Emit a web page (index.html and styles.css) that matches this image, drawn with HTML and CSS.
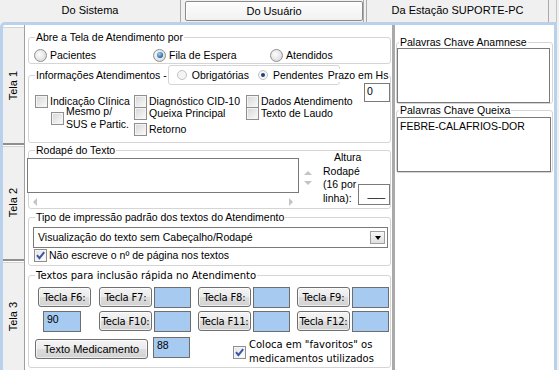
FILE: index.html
```html
<!DOCTYPE html>
<html lang="pt-BR">
<head>
<meta charset="utf-8">
<title>Configurações</title>
<link rel="stylesheet" href="styles.css">
</head>
<body>
<div class="topbar">
  <div class="ttab t1">Do Sistema</div>
  <div class="ttab t2">Do Usuário</div>
  <div class="tsep"></div>
  <div class="ttab t3">Da Estação SUPORTE-PC</div>
  <div class="tend"></div>
</div>
<div class="frame">
  <div class="sidetabs">
    <div class="stab s1"><span class="vtext">Tela 1</span></div>
    <div class="stab s2"><span class="vtext">Tela 2</span></div>
    <div class="stab s3"><span class="vtext">Tela 3</span></div>
  </div>
  <div class="leftcol">
    <section class="grp g1">
      <div class="lgd">Abre a Tela de Atendimento por</div>
      <div class="radios">
        <div class="opt o1"><span class="radio"></span>Pacientes</div>
        <div class="opt o2"><span class="radio on"></span>Fila de Espera</div>
        <div class="opt"><span class="radio"></span>Atendidos</div>
      </div>
    </section>

    <section class="grp g2">
      <div class="lgd lgd-tall">
        <span>Informações Atendimentos -</span>
        <div class="minibox">
          <span class="sradio"></span><span class="mtext m1">Obrigatórias</span>
          <span class="sradio on"></span><span class="mtext">Pendentes</span>
        </div>
        <span class="prazo">Prazo em Hs</span>
      </div>
      <div class="g2body">
        <div class="col c1">
          <div class="chk"><span class="cb"></span>Indicação Clínica</div>
          <div class="chk sub"><span class="cb"></span><span class="two">Mesmo p/<br>SUS e Partic.</span></div>
        </div>
        <div class="col c2">
          <div class="chk"><span class="cb"></span>Diagnóstico CID-10</div>
          <div class="chk up2"><span class="cb"></span>Queixa Principal</div>
          <div class="chk dn2"><span class="cb"></span>Retorno</div>
        </div>
        <div class="col c3">
          <div class="chk"><span class="cb"></span>Dados Atendimento</div>
          <div class="chk up2"><span class="cb"></span>Texto de Laudo</div>
        </div>
        <div class="numbox">0</div>
      </div>
    </section>

    <section class="grp g3">
      <div class="lgd">Rodapé do Texto</div>
      <div class="g3body">
        <div class="memo">
          <div class="memo-row">
            <div class="memo-box"></div>
            <div class="vscroll"><span class="arr aup"></span><span class="arr adown"></span></div>
          </div>
          <div class="hscroll"><span class="arr aleft"></span><span class="arr aright"></span></div>
        </div>
        <div class="altura"><span class="a1">Altura</span><br>Rodapé<br>(16 por<br>linha):</div>
        <div class="hbox">___</div>
      </div>
    </section>

    <section class="grp g4">
      <div class="lgd">Tipo de impressão padrão dos textos do Atendimento</div>
      <div class="select"><span>Visualização do texto sem Cabeçalho/Rodapé</span><span class="ddbtn"><span class="tri"></span></span></div>
      <div class="chk g4chk"><span class="cb on"><svg viewBox="0 0 11 11" width="11" height="11"><path d="M2 5.2 4.4 8.2 9.2 2.2" fill="none" stroke="#3a54a6" stroke-width="2"/></svg></span>Não escreve o nº de página nos textos</div>
    </section>

    <section class="grp g5">
      <div class="lgd comic">Textos para inclusão rápida no Atendimento</div>
      <div class="fkrow r1">
        <div class="btn comic">Tecla F6:</div>
        <div class="pair"><div class="btn comic">Tecla F7:</div><div class="bbox"></div></div>
        <div class="pair"><div class="btn comic">Tecla F8:</div><div class="bbox"></div></div>
        <div class="pair"><div class="btn comic">Tecla F9:</div><div class="bbox"></div></div>
      </div>
      <div class="fkrow r2">
        <div class="cell"><div class="bbox b90">90</div></div>
        <div class="pair"><div class="btn comic">Tecla F10:</div><div class="bbox"></div></div>
        <div class="pair"><div class="btn comic">Tecla F11:</div><div class="bbox"></div></div>
        <div class="pair"><div class="btn comic">Tecla F12:</div><div class="bbox"></div></div>
      </div>
      <div class="medrow">
        <div class="btn med">Texto Medicamento</div>
        <div class="bbox b88">88</div>
        <div class="fav">
          <span class="cb on"><svg viewBox="0 0 11 11" width="11" height="11"><path d="M2 5.2 4.4 8.2 9.2 2.2" fill="none" stroke="#3a54a6" stroke-width="2"/></svg></span>
          <span class="comic favtext">Coloca em "favoritos" os<br>medicamentos utilizados</span>
        </div>
      </div>
    </section>
  </div>
  <div class="vsep"></div>
  <div class="rightcol">
    <section class="rgrp rg1">
      <div class="lgd">Palavras Chave Anamnese</div>
      <div class="tbox tb1"></div>
    </section>
    <section class="rgrp rg2">
      <div class="lgd">Palavras Chave Queixa</div>
      <div class="tbox tb2">FEBRE-CALAFRIOS-DOR</div>
    </section>
  </div>
</div>
</body>
</html>
```

FILE: styles.css
```css
* { box-sizing: border-box; }
html, body { margin: 0; padding: 0; }
body {
  width: 559px; height: 370px; overflow: hidden;
  background: #f0f0f0;
  font-family: "Liberation Sans", Arial, sans-serif;
  font-size: 10.5px; line-height: 13px; color: #000;
}

/* top tabs */
.topbar { display: flex; height: 22px; }
.ttab { text-align: center; white-space: nowrap; font-size: 11px; }
.t1 { width: 181px; border-right: 1px solid #aaaaaa; line-height: 21px; }
.t2 {
  width: 178px; height: 20px; margin: 1px 0 1px 4px;
  border: 1px solid #8a8a8a; border-radius: 2px;
  background: linear-gradient(#fdfdfd, #f1f1f1);
  box-shadow: inset 1px 1px 0 #ffffff;
  line-height: 18px;
}
.tsep { width: 4px; border-left: 1px solid #aaaaaa; border-right: 1px solid #aaaaaa; }
.t3 { width: 182px; border-right: 1px solid #aaaaaa; line-height: 21px; }
.tend { width: 8px; border-right: 1px solid #c4c4c4; }

/* frame */
.frame {
  display: flex; width: 557px; height: 348px; background: #fff;
  border: 3px solid #b9d1ea; border-bottom: 0;
  border-top-left-radius: 5px;
}
.sidetabs {
  width: 22px; flex: none; display: flex; flex-direction: column;
  border-right: 1px solid #a0a0a0; padding-top: 2px;
}
.stab {
  background: #f0f0f0; display: flex; align-items: center; justify-content: center;
  border-top: 1px solid #d4d4d4; border-bottom: 2px solid #8f8f8f; flex: none;
  font-size: 11px;
}
.s1 { height: 118px; }
.s2 { height: 115px; margin-top: 1px; }
.s3 { flex: 1; margin-top: 1px; border-bottom: 0; }
.vtext { writing-mode: vertical-rl; transform: rotate(180deg); white-space: nowrap; }

.leftcol { width: 367px; flex: none; display: flex; flex-direction: column; }
.vsep { width: 3px; flex: none; background: #a9a9a9; }
.rightcol { width: 159px; flex: none; display: flex; flex-direction: column; padding: 0 1px; }

/* group boxes */
.grp { border: 1px solid #d5d5d5; border-radius: 3px; margin: 0 1px 0 3px; flex: none; }
.rgrp { border: 1px solid #d5d5d5; border-radius: 3px; flex: none; }
.lgd {
  width: max-content; background: #fff; margin: -7px 0 0 6px;
  padding: 0 1px; height: 13px; line-height: 13px; white-space: nowrap;
}

/* controls */
.radio {
  width: 13px; height: 13px; border-radius: 50%; flex: none;
  border: 1px solid #8e8f8f;
  background: radial-gradient(circle at 40% 40%, #fdfdfd, #d2d2d2);
  display: flex; align-items: center; justify-content: center;
}
.radio.on::after {
  content: ""; width: 6px; height: 6px; border-radius: 50%;
  background: radial-gradient(circle at 40% 35%, #9ad6f7, #1d5ba0 75%);
}
.sradio {
  width: 10px; height: 10px; border-radius: 50%; flex: none;
  border: 1px solid #c2c2c2; background: #f4f4f4;
  display: flex; align-items: center; justify-content: center;
}
.sradio.on::after { content: ""; width: 4px; height: 4px; border-radius: 50%; background: #1f3f7a; }
.cb {
  width: 13px; height: 13px; flex: none;
  border: 1px solid #8e8f8f;
  background: linear-gradient(135deg, #d6d6d6, #fbfbfb);
  box-shadow: inset 0 0 0 1px #f4f4f4;
  display: flex; align-items: center; justify-content: center;
}
.cb.on { background: linear-gradient(135deg, #e4e4e4, #ffffff); }
.chk { display: flex; align-items: center; gap: 2px; height: 14px; white-space: nowrap; }

/* group 1 */
.g1 { margin-top: 12px; }
.radios { display: flex; align-items: center; height: 14px; margin: 4px 0 1px; padding-left: 5px; }
.opt { display: flex; align-items: center; gap: 3px; white-space: nowrap; }
.o1 { width: 119px; }
.o2 { width: 117px; }

/* group 2 */
.g2 { margin-top: 11px; }
.lgd-tall { display: flex; align-items: center; height: 20px; margin-top: -11px; background: #fff; }
.minibox {
  display: flex; align-items: center; height: 20px; width: 172px;
  border: 1px solid #d5d5d5; border-radius: 3px; margin-left: 1px; padding-left: 8px;
}
.mtext { margin-left: 5px; }
.m1 { margin-right: 9px; }
.prazo { margin-left: -13px; background: #fff; padding-left: 1px; }
.g2body { display: flex; height: 57px; padding-left: 6px; }
.col { display: flex; flex-direction: column; padding-top: 9px; flex: none; }
.c1 { width: 99px; }
.c2 { width: 112px; }
.c3 { flex: 1; }
.sub { height: 26px; margin-top: -3px; padding-left: 16px; }
.up2 { margin-top: -2px; }
.dn2 { margin-top: 2px; }
.numbox {
  width: 26px; height: 19px; margin-top: -2px; flex: none;
  border: 1px solid #7a7a7a; padding: 1px 2px; background: #fff;
}

/* group 3 */
.g3 { margin-top: 7px; }
.g3body { display: flex; align-items: flex-start; height: 51px; }
.memo { margin-left: -2px; width: 290px; flex: none; }
.memo-row { display: flex; margin-top: 1px; height: 35px; }
.memo-box { width: 272px; height: 35px; border: 1px solid #7a7a7a; background: #fff; }
.vscroll { width: 18px; display: flex; flex-direction: column; align-items: center; padding-top: 13px; gap: 6px; }
.hscroll {
  width: 272px; height: 15px; display: flex; justify-content: space-between;
  align-items: center; padding: 3px 6px 0;
}
.arr { display: block; width: 0; height: 0; }
.aup { border-left: 4px solid transparent; border-right: 4px solid transparent; border-bottom: 4px solid #c4c4c4; }
.adown { border-left: 4px solid transparent; border-right: 4px solid transparent; border-top: 4px solid #c4c4c4; }
.aleft { border-top: 4px solid transparent; border-bottom: 4px solid transparent; border-right: 4px solid #c4c4c4; }
.aright { border-top: 4px solid transparent; border-bottom: 4px solid transparent; border-left: 4px solid #c4c4c4; }
.altura { width: 35px; flex: none; margin-left: 6px; margin-top: -6px; line-height: 13.5px; white-space: nowrap; }
.a1 { padding-left: 11px; }
.hbox {
  width: 32px; height: 21px; margin-top: 27px; flex: none;
  border: 1px solid #7a7a7a; padding: 2px 4px 0; text-align: right; background: #fff;
}

/* group 4 */
.g4 { margin-top: 8px; }
.select {
  display: flex; align-items: center; justify-content: space-between;
  margin: 3px 0 0 4px; width: 355px; height: 21px;
  border: 1px solid #7a7a7a; padding: 0 2px 0 4px; background: #fff; white-space: nowrap;
}
.ddbtn {
  width: 15px; height: 13px; border: 1px solid #a0a0a0;
  background: linear-gradient(#f8f8f8, #e0e0e0);
  display: flex; align-items: center; justify-content: center;
}
.tri { width: 0; height: 0; border-left: 3.5px solid transparent; border-right: 3.5px solid transparent; border-top: 4px solid #000; }
.g4chk { padding-left: 5px; margin-bottom: 3px; }

/* group 5 */
.g5 { margin-top: 9px; padding-bottom: 1px; }
.comic { font-family: "DejaVu Sans", sans-serif; font-size: 10px; }
.fkrow {
  display: grid; grid-template-columns: 54px 92px 92px 92px; column-gap: 7px;
  padding-left: 9px; height: 21px;
}
.r1 { margin-top: 5px; }
.r2 { margin-top: 3px; }
.pair { display: flex; gap: 2px; }
.btn {
  height: 20px; border: 1px solid #707070; border-radius: 3px;
  background: linear-gradient(#f4f4f4 0%, #ebebeb 48%, #dddddd 52%, #d2d2d2 100%);
  box-shadow: inset 0 0 0 1px rgba(255, 255, 255, 0.6);
  display: flex; align-items: center; justify-content: center; white-space: nowrap;
}
.fkrow .btn { width: 53px; letter-spacing: -0.2px; }
.bbox {
  width: 37px; height: 21px; flex: none; background: #a6caf0;
  border: 1px solid #6e6e6e; padding: 1px 3px;
}
.b90 { width: 38px; margin-left: 5px; }
.medrow { display: flex; align-items: flex-start; margin-top: 5px; padding-left: 6px; height: 29px; }
.med { width: 113px; margin-top: 2px; font-size: 11px; }
.b88 { margin-left: 5px; }
.fav { display: flex; align-items: center; margin-left: 43px; margin-top: 1px; }
.favtext { margin-left: 3px; line-height: 14px; white-space: nowrap; }

/* right column */
.rg1 { margin-top: 17px; }
.rgrp .lgd { margin-left: 2px; }
.tbox { border: 1px solid #7a7a7a; background: #fff; height: 55px; }
.tb1 { width: 153px; margin-top: -1px; }
.rg2 { margin-top: 6px; }
.tb2 { width: 154px; padding: 2px 2px; white-space: nowrap; }
```
